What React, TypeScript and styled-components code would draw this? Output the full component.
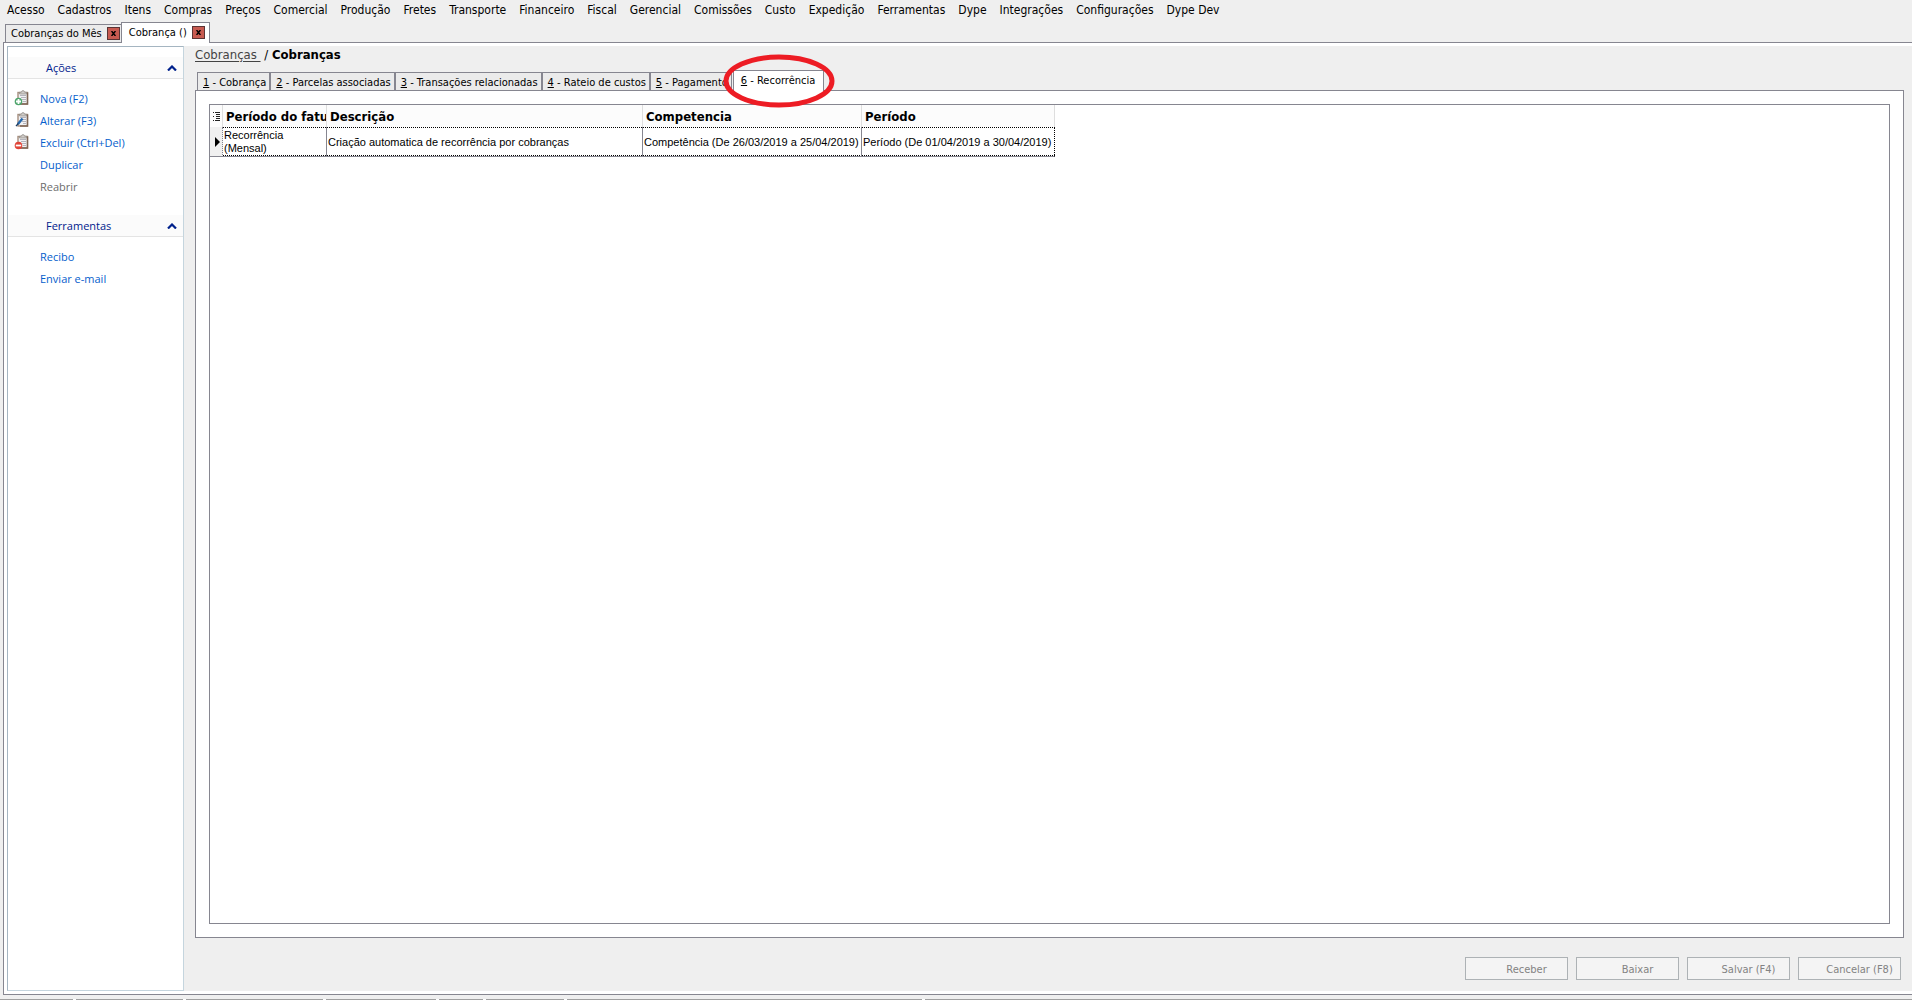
import React from 'react';
import styled, { createGlobalStyle, css } from 'styled-components';

const ui = '"DejaVu Sans Condensed", "DejaVu Sans", sans-serif';
const panelFont = '"Open Sans", "Noto Sans", sans-serif';
const cellFont = '"Liberation Sans", Arial, sans-serif';

const line = '#868690';
const face = '#efefef';

const GlobalStyle = createGlobalStyle`
  *, *::before, *::after { box-sizing: border-box; }
  body { margin: 0; background: ${face}; color: #000; font: 11px/13px ${ui}; }
  button { font: inherit; color: inherit; margin: 0; padding: 0; border: 0; background: none; }
  a { color: inherit; }
`;

const Shell = styled.div`
  display: flex;
  flex-direction: column;
  height: 100vh;
  overflow: hidden;
`;

const MenuBar = styled.nav`
  display: flex;
  flex: none;
  height: 20px;
  padding-left: 7px;
  gap: 13px;
`;

const MenuItem = styled.button`
  font-size: 12px;
  line-height: 20px;
  white-space: nowrap;
`;

const DocTabs = styled.div`
  display: flex;
  flex: none;
  align-items: flex-end;
  height: 22px;
  padding-left: 5px;
`;

const DocTab = styled.div<{ $active?: boolean }>`
  display: flex;
  align-items: center;
  gap: 5px;
  height: 18px;
  padding: 0 1px 0 5px;
  border: 1px solid ${line};
  border-bottom: 0;
  border-right: 0;
  background: #ebebeb;
  ${(p) => p.$active && css`
    z-index: 1;
    height: 21px;
    margin-bottom: -1px;
    padding: 0 4px 2px 7px;
    border-right: 1px solid ${line};
    background: #fff;
  `}
`;

const CloseButton = styled.button`
  display: grid;
  place-items: center;
  width: 13px;
  height: 13px;
  border: 1px solid #5a3434;
  background: #c75a50;
`;

const Frame = styled.div`
  display: flex;
  flex: 1;
  min-height: 0;
  padding: 3px 0 3px 3px;
  margin-left: 3px;
  border: 1px solid ${line};
  border-right: 0;
  background: #fff;
`;

const Sidebar = styled.aside`
  flex: none;
  width: 177px;
  border: 1px solid #c5d5de;
  border-top-color: #a5b5c1;
  border-left-color: #a5b5c1;
  background: #fff;
  font-family: ${panelFont};
`;

const Group = styled.section`
  padding: 0 0 18px;
  &:first-child { padding-top: 10px; }
`;

const GroupHeader = styled.button`
  display: flex;
  align-items: center;
  justify-content: space-between;
  width: 100%;
  height: 22px;
  padding: 0 6px 0 38px;
  border-bottom: 1px solid #e4e4e4;
  background: #fbfbfb;
  color: #00218c;
`;

const ActionList = styled.ul`
  list-style: none;
  margin: 8px 0 0;
  padding: 0;
`;

const Action = styled.button`
  display: grid;
  grid-template-columns: 16px auto;
  column-gap: 10px;
  align-items: center;
  height: 22px;
  padding-left: 6px;
  color: #0560cc;
  white-space: nowrap;
  &:disabled { color: #6d6d6d; }
`;

const ActionLabel = styled.span`
  grid-column: 2;
`;

const Main = styled.main`
  display: flex;
  flex: 1;
  flex-direction: column;
  min-width: 0;
  padding: 0 8px 11px 11px;
  background: ${face};
`;

const Breadcrumb = styled.nav`
  height: 24px;
  font-size: 13px;
  line-height: 17px;
  white-space: pre;
`;

const BreadcrumbLink = styled.a`
  color: #444;
  text-underline-offset: 2px;
`;

const PageTabs = styled.div`
  display: flex;
  flex: none;
  align-items: flex-end;
  height: 20px;
  padding-left: 2px;
`;

const PageTab = styled.button<{ $active?: boolean }>`
  position: relative;
  height: 18px;
  padding: 2px 3px 0 5px;
  border: 1px solid ${line};
  border-bottom: 0;
  background: #ebebeb;
  white-space: nowrap;
  ${(p) => p.$active && css`
    z-index: 1;
    height: 21px;
    margin: 0 0 -1px 1px;
    padding: 0 8px 2px 7px;
    background: #fff;
  `}
`;

const Marker = styled.svg`
  position: absolute;
  left: 50%;
  top: 50%;
  width: 112px;
  height: 54px;
  transform: translate(-50%, -50%);
  pointer-events: none;
`;

const TabPanel = styled.section`
  display: flex;
  flex: 1;
  min-height: 0;
  padding: 13px;
  border: 1px solid ${line};
  background: #fff;
`;

const Grid = styled.div`
  flex: 1;
  min-width: 0;
  border: 1px solid ${line};
  overflow: hidden;
`;

const Table = styled.table`
  table-layout: fixed;
  width: 845px;
  border-spacing: 0;
`;

const Col = styled.col<{ $w: number }>`
  width: ${(p) => p.$w}px;
`;

const HeadCell = styled.th`
  height: 22px;
  padding: 2px 0 0 3px;
  border-right: 1px solid #dedede;
  background: #fcfcfc;
  font-size: 13px;
  line-height: 16px;
  text-align: left;
  white-space: nowrap;
  overflow: hidden;
`;

const BaseCell = styled.td`
  height: 30px;
  border-right: 1px solid ${line};
  border-bottom: 1px solid ${line};
`;

const Cell = styled(BaseCell)`
  padding: 1px 0 0 1px;
  background:
    linear-gradient(90deg, #000 50%, transparent 50%) 0 0 / 2px 1px repeat-x,
    linear-gradient(90deg, #000 50%, transparent 50%) 0 100% / 2px 1px repeat-x;
  font-family: ${cellFont};
  line-height: 13px;
  &:last-child { border-right: 1px dotted #000; }
`;

const Indicator = styled(BaseCell)`
  padding: 0 0 0 5px;
  border-right-style: dotted;
  background: #f0f0f0;
`;

const IndicatorHead = styled(HeadCell)`
  padding: 0 0 0 3px;
`;

const Glyph = styled.svg`
  display: block;
  flex: none;
`;

const Footer = styled.footer`
  display: flex;
  flex: none;
  justify-content: flex-end;
  gap: 8px;
  margin: 19px 3px 0 0;
`;

const FooterButton = styled.button`
  width: 103px;
  height: 23px;
  padding: 1px 0 0 20px;
  border: 1px solid #adb2b5;
  background: #f4f4f4;
  color: #838383;
  white-space: nowrap;
`;

const StatusBar = styled.div`
  display: grid;
  flex: none;
  grid-template-columns: 73px 107px 137px 110px 44px 78px 355px 1fr;
  gap: 3px;
  height: 1px;
  margin-top: 4px;
  background: #fff;
`;

const StatusCell = styled.div`
  background: #a0a0a0;
`;

const menu = [
  'Acesso', 'Cadastros', 'Itens', 'Compras', 'Preços', 'Comercial', 'Produção', 'Fretes', 'Transporte',
  'Financeiro', 'Fiscal', 'Gerencial', 'Comissões', 'Custo', 'Expedição', 'Ferramentas', 'Dype',
  'Integrações', 'Configurações', 'Dype Dev',
];

const pageTabs = ['Cobrança', 'Parcelas associadas', 'Transações relacionadas', 'Rateio de custos', 'Pagamento', 'Recorrência'];

const footerButtons = ['Receber', 'Baixar', 'Salvar (F4)', 'Cancelar (F8)'];

type Badge = 'add' | 'edit' | 'remove';

const actions: { label: string; badge?: Badge; disabled?: boolean }[] = [
  { label: 'Nova (F2)', badge: 'add' },
  { label: 'Alterar (F3)', badge: 'edit' },
  { label: 'Excluir (Ctrl+Del)', badge: 'remove' },
  { label: 'Duplicar' },
  { label: 'Reabrir', disabled: true },
];

function ClipboardIcon({ badge }: { badge: Badge }) {
  return (
    <Glyph width="16" height="16" viewBox="0 0 16 16" aria-hidden="true">
      <rect x="4" y="2.500" width="9.500" height="11.500" fill="#f1f1f3" stroke="#a58e7e" strokeWidth="1.400" />
      <path d="M13.500 2.500V14H6" fill="none" stroke="#7d6554" strokeWidth="1.400" />
      <path d="M5.500 4V2.200h1.800L8 .8h2l.7 1.400h1.800V4z" fill="#cfccc9" stroke="#8d8882" strokeWidth=".7" />
      <path d="M6 5.500h6M7 7.500h5M8 9.500h4M9 11.500h3" stroke="#b4b4bc" />
      {badge === 'add' && (
        <>
          <circle cx="4.500" cy="11.500" r="3.800" fill="#4fa56c" />
          <path d="M4.500 9v5M2 11.500h5" stroke="#fff" strokeWidth="1.800" />
        </>
      )}
      {badge === 'edit' && (
        <>
          <path d="M8.500 6.500 4 12" stroke="#2467ab" strokeWidth="2.400" />
          <path d="M4.300 11.500 2 14.200" stroke="#173a63" strokeWidth="1.300" />
        </>
      )}
      {badge === 'remove' && (
        <>
          <circle cx="4.500" cy="11.500" r="3.800" fill="#e04438" />
          <path d="M1.800 11.500h5.400" stroke="#fff" strokeWidth="1.800" />
        </>
      )}
    </Glyph>
  );
}

const Chevron = () => (
  <Glyph width="10" height="6" viewBox="0 0 10 6" aria-hidden="true">
    <path d="M1 5.500 5 1.500l4 4" fill="none" stroke="#00218c" strokeWidth="2.200" />
  </Glyph>
);

const Close = ({ label }: { label: string }) => (
  <CloseButton aria-label={label}>
    <Glyph width="5" height="5" viewBox="0 0 5 5">
      <path d="M.5 0 4.500 5M4.500 0 .5 5" stroke="#000" strokeWidth="1.500" />
    </Glyph>
  </CloseButton>
);

export default function App() {
  return (
    <Shell>
      <GlobalStyle />
      <MenuBar>
        {menu.map((item) => <MenuItem key={item}>{item}</MenuItem>)}
      </MenuBar>
      <DocTabs>
        <DocTab><span>Cobranças do Mês</span><Close label="Fechar Cobranças do Mês" /></DocTab>
        <DocTab $active><span>Cobrança ()</span><Close label="Fechar Cobrança" /></DocTab>
      </DocTabs>
      <Frame>
        <Sidebar>
          <Group>
            <GroupHeader>Ações<Chevron /></GroupHeader>
            <ActionList>
              {actions.map((a) => (
                <li key={a.label}>
                  <Action disabled={a.disabled}>
                    {a.badge && <ClipboardIcon badge={a.badge} />}
                    <ActionLabel>{a.label}</ActionLabel>
                  </Action>
                </li>
              ))}
            </ActionList>
          </Group>
          <Group>
            <GroupHeader>Ferramentas<Chevron /></GroupHeader>
            <ActionList>
              <li><Action><ActionLabel>Recibo</ActionLabel></Action></li>
              <li><Action><ActionLabel>Enviar e-mail</ActionLabel></Action></li>
            </ActionList>
          </Group>
        </Sidebar>
        <Main>
          <Breadcrumb>
            <BreadcrumbLink href="#cobrancas">{'Cobranças '}</BreadcrumbLink>{' / '}<b>Cobranças</b>
          </Breadcrumb>
          <PageTabs role="tablist">
            {pageTabs.map((name, i) => {
              const active = i === 5;
              return (
                <PageTab key={name} role="tab" aria-selected={active} $active={active}>
                  <u>{i + 1}</u> - {name}
                  {active && (
                    <Marker viewBox="0 0 112 54" aria-hidden="true">
                      <ellipse cx="56" cy="27" rx="53" ry="24" fill="none" stroke="#ed1c24" strokeWidth="5" />
                    </Marker>
                  )}
                </PageTab>
              );
            })}
          </PageTabs>
          <TabPanel>
            <Grid>
              <Table>
                <colgroup>
                  <Col $w={13} /><Col $w={104} /><Col $w={316} /><Col $w={219} /><Col $w={193} />
                </colgroup>
                <thead>
                  <tr>
                    <IndicatorHead>
                      <Glyph width="8" height="9" viewBox="0 0 8 9" aria-hidden="true">
                        <path d="M0 .5h1M0 4.500h1M0 8.500h1M2 .5h5M3 2.500h4M3 4.500h4M3 6.500h4M2 8.500h5" stroke="#222" />
                      </Glyph>
                    </IndicatorHead>
                    <HeadCell>Período do fatu</HeadCell>
                    <HeadCell>Descrição</HeadCell>
                    <HeadCell>Competencia</HeadCell>
                    <HeadCell>Período</HeadCell>
                  </tr>
                </thead>
                <tbody>
                  <tr>
                    <Indicator>
                      <Glyph width="5" height="10" viewBox="0 0 5 10" aria-hidden="true">
                        <path d="M0 0 5 5 0 10z" />
                      </Glyph>
                    </Indicator>
                    <Cell>Recorrência<br />(Mensal)</Cell>
                    <Cell>Criação automatica de recorrência por cobranças</Cell>
                    <Cell>Competência (De 26/03/2019 a 25/04/2019)</Cell>
                    <Cell>Período (De 01/04/2019 a 30/04/2019)</Cell>
                  </tr>
                </tbody>
              </Table>
            </Grid>
          </TabPanel>
          <Footer>
            {footerButtons.map((name) => <FooterButton key={name} disabled>{name}</FooterButton>)}
          </Footer>
        </Main>
      </Frame>
      <StatusBar>
        {Array.from({ length: 8 }, (_, i) => <StatusCell key={i} />)}
      </StatusBar>
    </Shell>
  );
}
